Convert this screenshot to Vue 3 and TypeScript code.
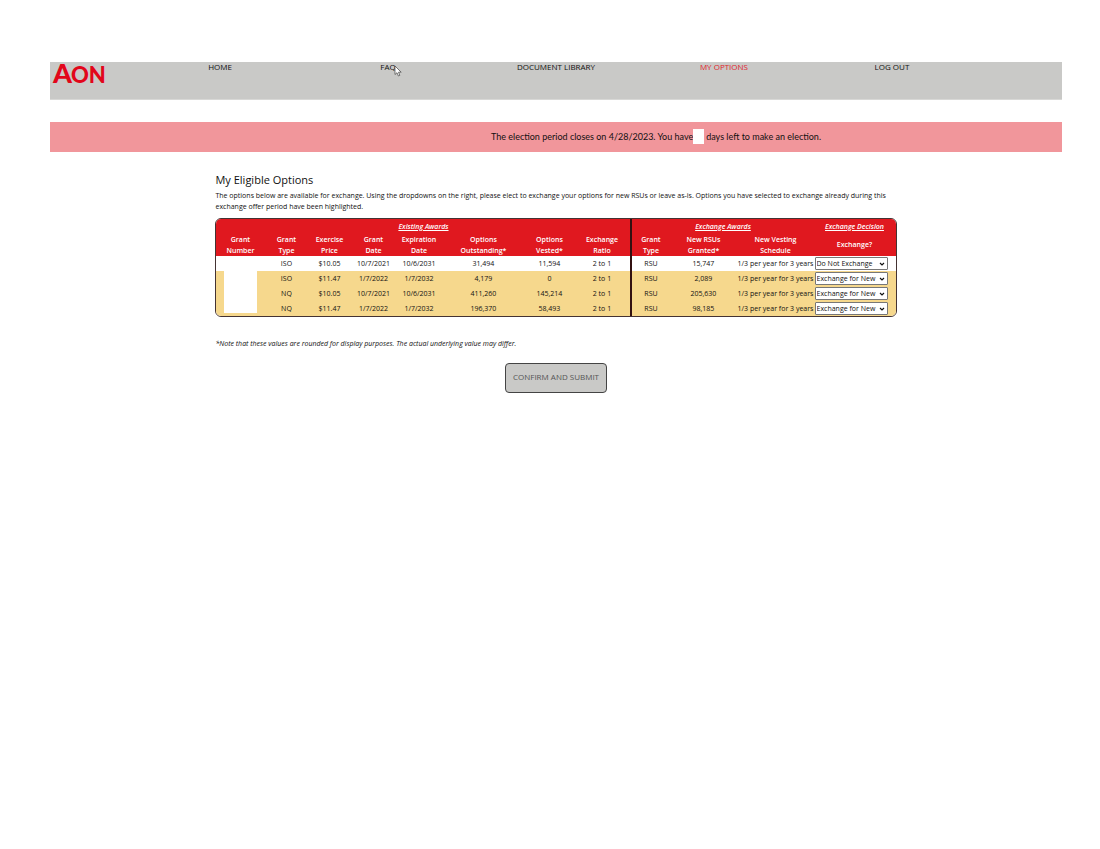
<script setup lang="ts">
import { reactive } from 'vue'

interface Grant {
  type: string
  price: string
  granted: string
  expires: string
  outstanding: string
  vested: string
  rsus: string
  decision: string
}

const links = ['HOME', 'FAQ', 'DOCUMENT LIBRARY', 'MY OPTIONS', 'LOG OUT']
const active = 'MY OPTIONS'
const KEEP = 'Do Not Exchange'
const SWAP = 'Exchange for New'

const grants = reactive<Grant[]>([
  { type: 'ISO', price: '$10.05', granted: '10/7/2021', expires: '10/6/2031', outstanding: '31,494', vested: '11,594', rsus: '15,747', decision: KEEP },
  { type: 'ISO', price: '$11.47', granted: '1/7/2022', expires: '1/7/2032', outstanding: '4,179', vested: '0', rsus: '2,089', decision: SWAP },
  { type: 'NQ', price: '$10.05', granted: '10/7/2021', expires: '10/6/2031', outstanding: '411,260', vested: '145,214', rsus: '205,630', decision: SWAP },
  { type: 'NQ', price: '$11.47', granted: '1/7/2022', expires: '1/7/2032', outstanding: '196,370', vested: '58,493', rsus: '98,185', decision: SWAP },
])
</script>

<template>
  <div class="page">
    <header class="bar">
      <svg class="logo" viewBox="0 0 60 32" role="img" aria-label="Aon">
        <text x="1" y="21" class="logo-a">A</text>
        <text x="19" y="21" class="logo-on">ON</text>
      </svg>
      <nav class="nav">
        <span v-for="link in links" :key="link" class="slot">
          <a href="#" :class="{ active: link === active }">{{ link }}</a>
          <svg v-if="link === 'FAQ'" class="pointer" viewBox="0 0 8 12" aria-hidden="true">
            <path d="M1 1V9.5L3 7.7L4.4 11L5.8 10.4L4.5 7.2H7.2Z" />
          </svg>
        </span>
      </nav>
    </header>

    <p class="notice">
      The election period closes on 4/28/2023. You have<span class="days"></span>days left to make an election.
    </p>

    <main class="content">
      <h1>My Eligible Options</h1>
      <p class="intro">
        The options below are available for exchange. Using the dropdowns on the right, please elect to exchange your
        options for new RSUs or leave as-is. Options you have selected to exchange already during this<br />exchange
        offer period have been highlighted.
      </p>

      <div class="frame">
        <table>
          <colgroup>
            <col class="c-number" /><col class="c-type" /><col class="c-price" /><col class="c-date" />
            <col class="c-expiry" /><col class="c-out" /><col class="c-vested" /><col class="c-ratio" />
            <col class="c-new" /><col class="c-rsus" /><col class="c-schedule" /><col class="c-decision" />
          </colgroup>
          <thead>
            <tr class="groups">
              <th colspan="8" scope="colgroup">Existing Awards</th>
              <th colspan="3" scope="colgroup" class="split">Exchange Awards</th>
              <th scope="colgroup">Exchange Decision</th>
            </tr>
            <tr class="names">
              <th scope="col">Grant<br />Number</th>
              <th scope="col">Grant<br />Type</th>
              <th scope="col">Exercise<br />Price</th>
              <th scope="col">Grant<br />Date</th>
              <th scope="col">Expiration<br />Date</th>
              <th scope="col">Options<br />Outstanding*</th>
              <th scope="col">Options<br />Vested*</th>
              <th scope="col">Exchange<br />Ratio</th>
              <th scope="col" class="split">Grant<br />Type</th>
              <th scope="col">New RSUs<br />Granted*</th>
              <th scope="col">New Vesting<br />Schedule</th>
              <th scope="col">Exchange?</th>
            </tr>
          </thead>
          <tbody>
            <tr v-for="(g, i) in grants" :key="i" :class="{ chosen: g.decision === SWAP }">
              <td class="number"><span class="mask"></span></td>
              <td>{{ g.type }}</td>
              <td>{{ g.price }}</td>
              <td>{{ g.granted }}</td>
              <td>{{ g.expires }}</td>
              <td>{{ g.outstanding }}</td>
              <td>{{ g.vested }}</td>
              <td>2 to 1</td>
              <td class="split">RSU</td>
              <td>{{ g.rsus }}</td>
              <td>1/3 per year for 3 years</td>
              <td class="choice">
                <span class="picker">
                  <select v-model="g.decision" :aria-label="'Exchange decision for grant ' + (i + 1)">
                    <option>{{ KEEP }}</option>
                    <option>{{ SWAP }}</option>
                  </select>
                  <svg class="chevron" viewBox="0 0 6 4" aria-hidden="true"><path d="M1 1L3 3L5 1" /></svg>
                </span>
              </td>
            </tr>
          </tbody>
        </table>
      </div>

      <p class="note">*Note that these values are rounded for display purposes. The actual underlying value may differ.</p>
      <button type="button" class="submit">CONFIRM AND SUBMIT</button>
    </main>
  </div>
</template>

<style>
body {
  margin: 0;
  background: #fff;
}
</style>

<style scoped>
.page {
  padding: 62px 38px 0 50px;
  font-family: "Open Sans", "Noto Sans", sans-serif;
  font-size: 7px;
  color: #111;
}
.bar {
  position: relative;
  display: flex;
  justify-content: center;
  height: 38px;
  background: #c9c9c7;
  border-bottom: 1px solid #d8d8d6;
  box-sizing: border-box;
}
.logo {
  position: absolute;
  left: 2px;
  top: 0;
  width: 60px;
  height: 32px;
  overflow: visible;
  fill: #e2061a;
  font-family: Lato, sans-serif;
  font-weight: 900;
}
.logo-a {
  font-size: 27px;
}
.logo-on {
  font-size: 22px;
}
.nav {
  display: flex;
  width: 83%;
}
.slot {
  position: relative;
  flex: 1;
  text-align: center;
  line-height: 10px;
}
.nav a {
  display: block;
  font-size: 8px;
  color: #111;
  text-decoration: none;
}
.nav a.active {
  color: #e0252b;
}
.pointer {
  position: absolute;
  left: calc(50% + 6px);
  top: 3px;
  width: 8px;
  height: 12px;
  fill: #fff;
  stroke: #444;
  stroke-width: 0.7;
}
.notice {
  display: flex;
  align-items: center;
  justify-content: center;
  height: 30px;
  margin: 22px 0 0;
  padding: 0 0 1px 200px;
  box-sizing: border-box;
  background: #f1969b;
  font-family: Lato, sans-serif;
  font-size: 9px;
}
.days {
  width: 11px;
  height: 15px;
  margin: 0 2px 0 0;
  background: #fff;
}
.content {
  display: flex;
  flex-direction: column;
  width: 67.3%;
  margin: 0 auto;
}
h1 {
  margin: 20px 0 0;
  font-size: 11px;
  line-height: 16px;
  font-weight: 400;
}
.intro {
  margin: 2px 0 0;
  line-height: 11px;
}
.frame {
  margin-top: 6px;
  border: 1px solid #433;
  border-radius: 6px;
  overflow: hidden;
}
table {
  width: 100%;
  table-layout: fixed;
  border-collapse: separate;
  border-spacing: 0;
}
.c-number { width: 48px; }
.c-type { width: 44px; }
.c-price { width: 42px; }
.c-date { width: 46px; }
.c-expiry { width: 45px; }
.c-out { width: 84px; }
.c-vested { width: 48px; }
.c-ratio { width: 57px; }
.c-new { width: 39px; }
.c-rsus { width: 68px; }
.c-schedule { width: 76px; }
.c-decision { width: 82px; }
th,
td {
  padding: 0;
  text-align: center;
  white-space: nowrap;
}
th {
  background: #e0181f;
  color: #fff;
  font-weight: 600;
  line-height: 11px;
}
.groups th {
  height: 14px;
  font-style: italic;
  text-decoration: underline;
}
.names th {
  height: 23px;
}
td {
  height: 15px;
  line-height: 13px;
}
.split {
  border-left: 2px solid #311;
}
.chosen td {
  background: #f6d88d;
}
.mask {
  display: block;
  width: 33px;
  height: 15px;
  margin-left: 8px;
  background: #fff;
}
tr:last-child .mask {
  height: 12px;
  margin-bottom: 3px;
}
.choice {
  text-align: left;
}
.picker {
  position: relative;
  display: block;
  width: 73px;
  height: 13px;
  margin-left: 1px;
}
select {
  display: block;
  appearance: none;
  width: 100%;
  height: 13px;
  padding: 0 8px 0 1px;
  border: 1px solid #777;
  border-radius: 1px;
  background: #fff;
  color: #111;
  font-family: inherit;
  font-size: 7px;
  line-height: 11px;
}
.chevron {
  position: absolute;
  right: 3px;
  top: 5px;
  width: 6px;
  height: 4px;
  fill: none;
  stroke: #111;
  stroke-width: 1.2;
  pointer-events: none;
}
.note {
  margin: 21px 0 0;
  font-style: italic;
  line-height: 11px;
}
.submit {
  align-self: center;
  height: 30px;
  margin-top: 14px;
  padding: 0 7px 3px;
  border: 1px solid #444;
  border-radius: 4px;
  background: #c9c9c7;
  color: #555;
  font-family: inherit;
  font-size: 8px;
}
</style>
